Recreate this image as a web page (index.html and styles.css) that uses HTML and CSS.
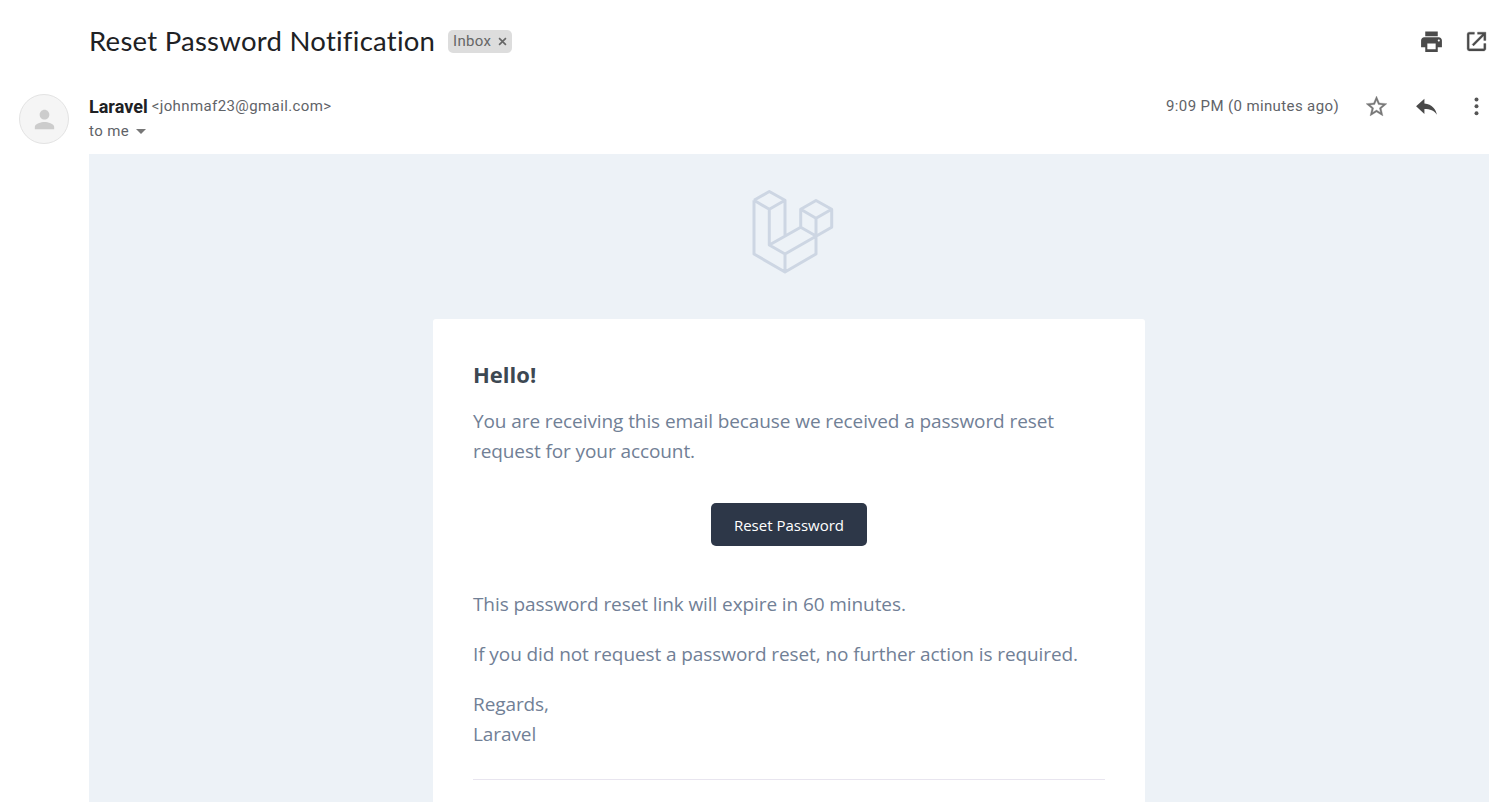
FILE: index.html
```html
<!DOCTYPE html>
<html lang="en">
<head>
<meta charset="utf-8">
<title>Reset Password Notification</title>
<link rel="stylesheet" href="styles.css">
</head>
<body>
<header class="subject">
  <h1 class="subject-title">Reset Password Notification</h1>
  <span class="label"><span>Inbox</span><svg class="label-close" viewBox="0 0 10 10"><path d="M1.2 1.2l7.6 7.6M8.8 1.2L1.2 8.8"/></svg></span>
  <div class="subject-actions">
    <svg class="icon" viewBox="0 0 24 24"><path d="M19 8H5c-1.660 0-3 1.340-3 3v6.500h4V22h12v-4.500h4V11c0-1.660-1.340-3-3-3zm-3 11.500H8V14h8v5.500zm3-7.500c-.55 0-1-.45-1-1s.45-1 1-1 1 .45 1 1-.45 1-1 1zm-1-9.500H6V7h12V2.500z"/></svg>
    <svg class="icon open" viewBox="0 0 24 24"><path d="M19 19H5V5h5V3H5a2 2 0 0 0-2 2v14a2 2 0 0 0 2 2h14c1.100 0 2-.9 2-2v-5h-2v5zM13 3v2h4.600l-9.800 9.800 1.400 1.400L19 6.400V11h2V3h-8z"/></svg>
  </div>
</header>
<section class="sender">
  <div class="avatar"><svg viewBox="0 0 24 24"><path d="M12 12c2.210 0 4-1.790 4-4s-1.790-4-4-4-4 1.790-4 4 1.790 4 4 4zm0 2c-2.670 0-8 1.340-8 4v2h16v-2c0-2.660-5.330-4-8-4z"/></svg></div>
  <div class="sender-info">
    <div class="from"><strong class="name">Laravel</strong><span class="address">&lt;johnmaf23@gmail.com&gt;</span></div>
    <div class="to"><span>to me</span><i class="caret"></i></div>
  </div>
  <div class="meta">
    <span class="time">9:09 PM (0 minutes ago)</span>
    <svg class="icon star" viewBox="0 0 24 24"><path d="M22 9.240l-7.190-.62L12 2 9.190 8.630 2 9.240l5.460 4.730L5.820 21 12 17.270 18.180 21l-1.630-7.030L22 9.240zM12 15.400l-3.760 2.270 1-4.280-3.320-2.880 4.380-.38L12 6.100l1.710 4.040 4.380.38-3.320 2.880 1 4.280L12 15.400z"/></svg>
    <svg class="icon" viewBox="0 0 24 24"><path d="M10 9V4.500l-8 7.300 8 7.300v-4.600c5.500 0 9.300 1.600 12 5.400-1-5.500-4.500-10-12-10.900z"/></svg>
    <svg class="icon dots" viewBox="0 0 24 24"><circle cx="12" cy="5.200" r="1.900"/><circle cx="12" cy="11.800" r="1.900"/><circle cx="12" cy="18.400" r="1.900"/></svg>
  </div>
</section>
<main class="mail">
  <svg class="logo" viewBox="750 188 86 88"><path d="M754 200.300L769.300 191.500 785 200.300V236M754 200.300V254L785 272 816 254V218.300M754 200.300L769.300 209.300V245L785 254V272M769.300 209.300L785 200.300M769.300 245L800.700 227.300V209.300L816 200.500 831.700 209.300V227.300L785 254M800.700 209.300L816 218.300 831.700 209.300M800.700 227.300L816 236"/></svg>
  <article class="card">
    <h2 class="hello">Hello!</h2>
    <p>You are receiving this email because we received a password reset<br>request for your account.</p>
    <a class="button">Reset Password</a>
    <p>This password reset link will expire in 60 minutes.</p>
    <p>If you did not request a password reset, no further action is required.</p>
    <p>Regards,<br>Laravel</p>
    <hr class="rule">
  </article>
</main>
</body>
</html>
```
FILE: styles.css
```css
* { box-sizing: border-box; }
body {
  margin: 0;
  height: 802px;
  overflow: hidden;
  display: flex;
  flex-direction: column;
  background: #fff;
  color: #5f6368;
  font-family: Roboto, "Liberation Sans", sans-serif;
}
.subject {
  display: flex;
  align-items: center;
  height: 82px;
  flex: none;
  padding: 0 19px 0 89px;
}
.subject-title {
  margin: 0;
  width: 359px;
  white-space: nowrap;
  color: #202124;
  font: 400 27.5px/36px Lato, sans-serif;
  letter-spacing: .26px;
}
.label {
  display: flex;
  align-items: center;
  gap: 6.5px;
  height: 23px;
  width: 64px;
  padding: 0 5px;
  border-radius: 5px;
  background: #ddd;
  color: #666;
  font-size: 15px;
  letter-spacing: .35px;
}
.label-close { width: 9px; height: 9px; flex: none; fill: none; stroke: #666; stroke-width: 1.8; }
.subject-actions { display: flex; gap: 20px; margin-left: auto; }
.icon { width: 25px; height: 25px; flex: none; fill: #4a4a4a; }
.open { stroke: #4a4a4a; stroke-width: .3; }
.sender {
  display: flex;
  flex: none;
  height: 72px;
  padding: 12px 19px 0;
}
.avatar {
  display: flex;
  align-items: center;
  justify-content: center;
  width: 50px;
  height: 50px;
  margin-right: 20px;
  border: 1px solid #e3e3e3;
  border-radius: 50%;
  background: #f5f5f5;
}
.avatar svg { width: 29px; height: 29px; fill: #ccc; }
.from { display: flex; gap: 4px; height: 24px; }
.name { color: #202124; font-size: 18px; font-weight: 700; line-height: 26px; }
.address { font-size: 15px; letter-spacing: .4px; line-height: 24px; }
.to { display: flex; align-items: center; gap: 7px; height: 25px; font-size: 15px; letter-spacing: .4px; }
.caret { margin-top: 1px; border: 5px solid transparent; border-top-color: #777; border-bottom: 0; }
.meta {
  display: flex;
  align-items: center;
  height: 25px;
  gap: 25px;
  margin-left: auto;
}
.time { padding-bottom: 2px; font-size: 15px; letter-spacing: .38px; }
.star { fill: #777; stroke: #777; stroke-width: .3; }
.dots { fill: #555; }
.mail {
  flex: 1;
  margin: 0 19px 0 89px;
  background: #edf2f7;
  display: flex;
  flex-direction: column;
  align-items: center;
  padding-top: 34px;
}
.logo { width: 86px; height: 88px; flex: none; margin: 0 0 43px 8px; fill: none; stroke: #cdd6e3; stroke-width: 3; stroke-linejoin: round; }
.card {
  width: 712px;
  flex: 1;
  padding: 39px 40px 0;
  border-radius: 3px 3px 0 0;
  background: #fff;
  color: #718096;
  font-family: "Open Sans", "Noto Sans", sans-serif;
}
.hello { margin: 0 0 16px; color: #3d4852; font-size: 22px; line-height: 32px; font-weight: 700; }
.card p { margin: 0 0 20px; font-size: 19px; line-height: 30px; letter-spacing: -.09px; white-space: nowrap; }
.button {
  display: flex;
  align-items: center;
  justify-content: center;
  width: 156px;
  height: 43px;
  margin: 37px auto 43px;
  border-radius: 5px;
  background: #2d3748;
  color: #fff;
  font-size: 15px;
}
.rule { margin: 30px 0 0; border: 0; border-top: 1px solid #e8e5ef; }
```
